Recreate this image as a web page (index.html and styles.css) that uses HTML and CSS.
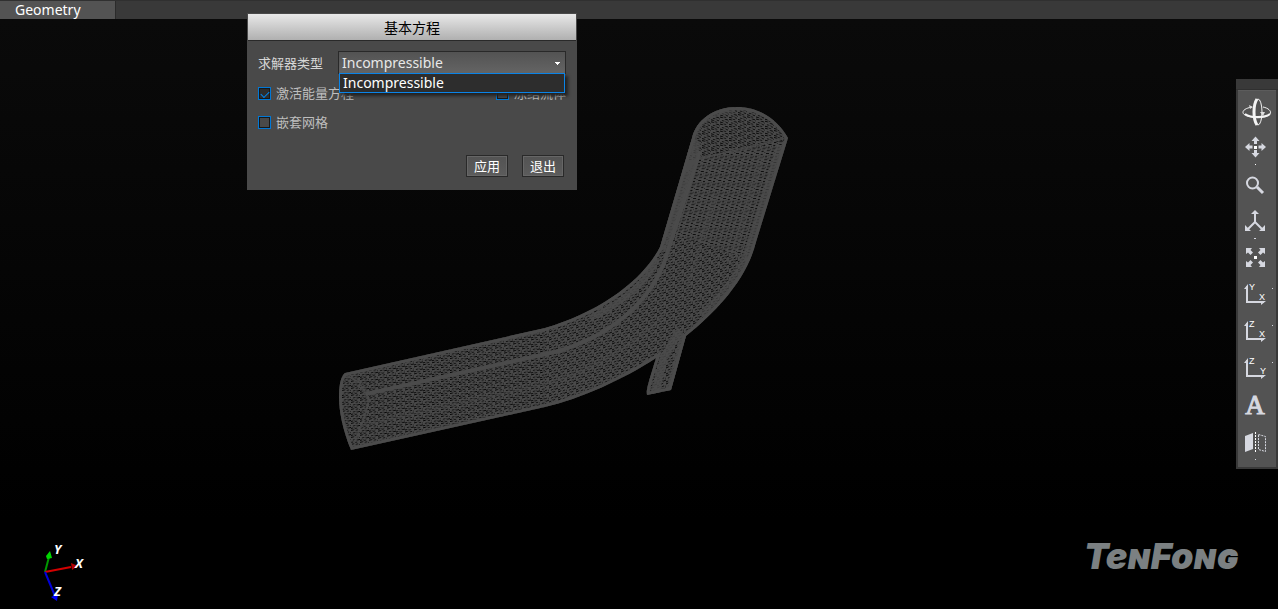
FILE: index.html
```html
<!DOCTYPE html>
<html lang="zh-CN">
<head>
<meta charset="utf-8">
<meta name="viewport" content="width=device-width, initial-scale=1">
<title>Geometry</title>
<link rel="stylesheet" href="styles.css">
</head>
<body>
<div class="app">
  <header class="tabs"><button class="tab" type="button">Geometry</button></header>

  <main class="stage">
    <svg class="model" viewBox="0 19 1278 590" aria-hidden="true">
      <defs>
        <pattern id="mesh-low" width="9" height="7" patternUnits="userSpaceOnUse" patternTransform="skewY(-13)">
          <path d="M0 0h3v1h-3zM5 1h2v1h-2zM2 3h2v1h-2zM6 4h3v1h-3zM0 5h2v1h-2zM4 6h2v1h-2z" fill="#080808"/><path d="M8 2h1v1h-1zM5 3h1v1h-1zM3 5h1v1h-1z" fill="#222"/>
        </pattern>
        <pattern id="mesh-bend" width="9" height="8" patternUnits="userSpaceOnUse" patternTransform="skewY(-24)">
          <path d="M0 0h3v1h-3zM5 1h2v1h-2zM2 3h2v1h-2zM6 4h3v1h-3zM0 6h2v1h-2zM4 6h2v1h-2z" fill="#080808"/><path d="M8 2h1v1h-1zM5 3h1v1h-1zM3 5h1v1h-1z" fill="#222"/>
        </pattern>
        <pattern id="mesh-up" width="10" height="9" patternUnits="userSpaceOnUse" patternTransform="skewX(-16)">
          <path d="M0 0h3v1h-3zM0 3h2v1h-2zM0 6h3v1h-3zM5 1h2v1h-2zM5 4h3v1h-3zM5 7h2v1h-2z" fill="#0a0a0a"/><path d="M3 2h1v1h-1zM8 3h1v1h-1zM3 5h1v1h-1zM8 8h1v1h-1z" fill="#222"/>
        </pattern>
        <pattern id="mesh-cap" width="9" height="7" patternUnits="userSpaceOnUse" patternTransform="skewY(14)">
          <path d="M0 0h3v1h-3zM5 1h3v1h-3zM2 3h2v1h-2zM6 4h2v1h-2zM0 5h3v1h-3zM4 6h2v1h-2z" fill="#080808"/><path d="M8 2h1v1h-1zM5 3h1v1h-1z" fill="#222"/>
        </pattern>
        <clipPath id="pipe-clip"><path id="pipe" d="M345 373 545 328C597 313 642 282 660 247L692 138C696 120 714 107 737 107C760 107 778 120 788 138L756 242C747 279 717 311 686 336L671 390 647 395C646 390 648 384 656 358C624 379 580 399 545 407L351 450C343 431 339 412 339 397C339 384 341 376 345 373Z"/></clipPath>
      </defs>
      <use href="#pipe" fill="#494949"/>
      <g clip-path="url(#pipe-clip)">
        <path d="M330 360 545 315V420L340 470Z" fill="url(#mesh-low)"/>
        <path d="M545 315 640 225 760 262 670 400 545 420Z" fill="url(#mesh-bend)"/>
        <path d="M640 225 700 157 810 132 760 262Z" fill="url(#mesh-up)"/>
        <path d="M680 162V95H800V138Z" fill="url(#mesh-cap)"/>
        <g fill="none" stroke="#4b4b4b">
          <path d="M366 394 555 352C606 338 647 306 664 263L700 151" stroke-width="4"/>
          <path d="M660 250 693 140" stroke-width="17" opacity=".75"/>
          <path d="M657 258C650 280 620 305 590 318" stroke-width="6" opacity=".8"/>
          <path d="M347 376 359 382 369 399C366 414 361 428 354 443" stroke-width="2" opacity=".8"/>
          <path d="M699 158C724 154 757 145 786 138" stroke-width="2" opacity=".8"/>
          <path d="M690 155C693 120 708 112 735 109" stroke-width="7" opacity=".6"/>
          <path d="M781 145 751 242C744 269 727 292 701 316" stroke-width="8" opacity=".65"/>
          <path d="M654 397 664 357 680 330M669 396 684 336" stroke-width="8" opacity=".8"/>
          <path d="M716 195 688 285M762 155 729 264" stroke-width="3" opacity=".4"/>
          <path d="M365 425 545 384C594 371 640 340 664 315" stroke-width="3" opacity=".4"/>
          <use href="#pipe" stroke-width="6"/>
        </g>
      </g>
    </svg>

    <svg class="triad" viewBox="0 0 50 68" role="img" aria-label="X Y Z">
      <path d="M5 32 9 17" stroke="#009900" stroke-width="2"/><path d="M10 11 6 16 7 19 12 18Z" fill="#00d800"/>
      <path d="M5 32 31 27" stroke="#d40000" stroke-width="2"/><path d="M31 23 38 26 32 30Z" fill="#b00000"/>
      <path d="M5 32 15 56" stroke="#0000dc" stroke-width="2"/><path d="M11 57 18 54 17 61Z" fill="#0000ff"/>
      <text x="14" y="14">Y</text><text x="35" y="28">X</text><text x="14" y="56">Z</text>
    </svg>

    <div class="brand">TenFong</div>
  </main>

  <form class="dialog" aria-labelledby="dialog-title">
    <h1 class="dialog-title" id="dialog-title">基本方程</h1>
    <div class="dialog-body">
      <div class="field">
        <label for="solver">求解器类型</label>
        <div class="combo">
          <select class="combo-box" id="solver"><option>Incompressible</option></select>
          <svg class="combo-arrow" viewBox="0 0 5 3" aria-hidden="true"><path d="M0 0h5v1h-1v1h-1v1h-1v-1h-1v-1h-1z" fill="#fff"/></svg>
          <ul class="popup" role="listbox" aria-label="求解器类型"><li role="option" aria-selected="true">Incompressible</li></ul>
        </div>
      </div>
      <div class="checks">
        <label class="check"><input type="checkbox" checked>激活能量方程</label>
        <label class="check"><input type="checkbox">冻结流体</label>
      </div>
      <div class="checks"><label class="check"><input type="checkbox">嵌套网格</label></div>
      <div class="actions"><button class="push" type="button">应用</button><button class="push" type="button">退出</button></div>
    </div>
  </form>

  <nav class="toolbar" aria-label="View">
    <div class="grip"></div>
    <div class="tools">
      <button class="tool" type="button" aria-label="Rotate"><svg viewBox="0 0 38 37">
        <g fill="none" stroke="#f4f4f4"><ellipse cx="20" cy="20" rx="4" ry="13" stroke-width="1"/><path d="M19 7C15 13 15 27 19 33" stroke-width="3"/><path d="M14 15C3 17 3 22 9 24C17 27 29 26 32 22C34 19 30 16 25 15" stroke-width="1"/><path d="M7 22C13 26 27 26 32 22" stroke-width="2"/></g><path d="M11 13 15 15 12 17ZM22 20H27L25 24Z" fill="#ddd"/></svg></button>
      <button class="tool" type="button" aria-label="Pan"><svg viewBox="0 0 38 37">
        <path id="arrow-up" d="M17.5 7.500 21.500 12H19V15H16V12H13.500Z"/><use href="#arrow-up" transform="rotate(90 17.500 18)"/><use href="#arrow-up" transform="rotate(180 17.500 18)"/><use href="#arrow-up" transform="rotate(270 17.500 18)"/><path d="M16 17h3v3h-3zM17 35h1v1h-1z" fill="#fff"/></svg></button>
      <button class="tool" type="button" aria-label="Zoom"><svg viewBox="0 0 38 37"><circle cx="14.500" cy="17" r="5.500" fill="none" stroke="#d6d8e0" stroke-width="2"/><path d="M19 21 25 27" stroke="#d6d8e0" stroke-width="3"/></svg></button>
      <button class="tool" type="button" aria-label="Axes"><svg viewBox="0 0 38 37"><path d="M17 10V19L9 27M17 19 25 27" fill="none" stroke="#d6d8e0" stroke-width="2"/><path d="M17 7 21 11H13ZM7 22V28H13ZM27 22V28H21Z"/><path d="M16 35h2v1h-2z"/></svg></button>
      <button class="tool" type="button" aria-label="Fit"><svg viewBox="0 0 38 37"><path id="corner" d="M8 8H14L12.500 10 15 12.500 12.500 15 10 12.500 8 14Z"/><use href="#corner" transform="rotate(90 17.500 17.500)"/><use href="#corner" transform="rotate(180 17.500 17.500)"/><use href="#corner" transform="rotate(270 17.500 17.500)"/><path d="M16 16h3v3h-3z" fill="#fff"/></svg></button>
      <button class="tool" type="button" aria-label="XY view"><svg viewBox="0 0 38 37"><g id="ortho"><path d="M9 9V25H26" fill="none" stroke="#d6d8e0" stroke-width="2"/><path d="M6 12 10 7V12ZM23 28 28 24H23ZM34 11h1v1h-1z"/></g><text x="11" y="13">Y</text><text x="21" y="23">X</text></svg></button>
      <button class="tool" type="button" aria-label="XZ view"><svg viewBox="0 0 38 37"><use href="#ortho"/><text x="11" y="13">Z</text><text x="21" y="23">X</text></svg></button>
      <button class="tool" type="button" aria-label="YZ view"><svg viewBox="0 0 38 37"><use href="#ortho"/><text x="11" y="13">Z</text><text x="22" y="23">Y</text></svg></button>
      <button class="tool" type="button" aria-label="Text"><svg viewBox="0 0 38 37"><text class="letter" x="17" y="26">A</text></svg></button>
      <button class="tool" type="button" aria-label="Mirror"><svg viewBox="0 0 38 37"><path d="M7 11 15 8V24L7 27Z"/><path d="M17.500 7V28" stroke="#fff" stroke-dasharray="2 1"/><path d="M20.500 9.500 27.500 11.500V26.500L20.500 24.500Z" fill="none" stroke="#d6d8e0" stroke-dasharray="2 1"/><path d="M17 34h1v1h-1z"/></svg></button>
    </div>
  </nav>
</div>
</body>
</html>
```
FILE: styles.css
```css
* { box-sizing: border-box; }
body {
  margin: 0;
  background: #000;
  color: #fff;
  font: 13px/20px "Noto Sans CJK SC", sans-serif;
}
button, select, input { font: inherit; color: inherit; margin: 0; }
.app { position: relative; min-height: 100vh; display: flex; flex-direction: column; }

.tabs { display: flex; height: 19px; background: #393939; border-top: 1px solid #303030; }
.tab {
  padding: 0 34px 0 15px;
  border: 0;
  border-right: 1px solid #2b2b2b;
  background: #535353;
  font: 14px/18px "Noto Sans", sans-serif;
}

.stage { position: relative; flex: 1; background: linear-gradient(#0a0a0a, #000 85%); }
.model { position: absolute; inset: 0; width: 100%; height: 100%; }
.triad { position: absolute; left: 40px; bottom: 1px; width: 50px; height: 68px; fill: none; }
.triad text { fill: #fff; font: italic bold 13px "Open Sans", sans-serif; }
.brand {
  position: absolute;
  right: 40px;
  bottom: 33px;
  color: #7b8082;
  font: italic 900 36px/40px Inter, sans-serif;
  font-variant-caps: small-caps;
}

.dialog {
  position: absolute;
  left: 247px;
  top: 13px;
  width: 330px;
  background: #494949;
  border: 1px solid #494949;
}
.dialog-title {
  margin: 0;
  border-bottom: 1px solid #292929;
  background: linear-gradient(#e8e8e8, #b0b0b0);
  color: #000;
  font-size: 14px;
  font-weight: 400;
  line-height: 26px;
  text-align: center;
}
.dialog-body { padding: 10px 10px 12px; color: #bebebe; }
.field { display: flex; align-items: center; gap: 15px; color: #d6d6d6; }
.combo { position: relative; flex: 1; }
.combo-box {
  display: block;
  width: 100%;
  height: 23px;
  padding: 0 3px;
  border: 1px solid #292929;
  border-radius: 0;
  appearance: none;
  background: linear-gradient(#535353, #646464);
  color: #e8e8e8;
  font: 14px/20px "Noto Sans", sans-serif;
}
.combo-arrow { position: absolute; right: 6px; top: 11px; width: 5px; height: 3px; }
.popup {
  position: absolute;
  z-index: 1;
  left: 1px;
  right: 1px;
  top: 22px;
  margin: 0;
  padding: 0 3px;
  border: 1px solid #0a84e8;
  background: #2d2d2d;
  box-shadow: 3px 3px 3px #222;
  color: #fff;
  font: 14px/18px "Noto Sans", sans-serif;
  list-style: none;
}
.checks { display: flex; justify-content: space-between; margin-top: 9px; }
.checks:first-of-type { margin-top: 10px; }
.check { display: flex; align-items: center; gap: 5px; }
.check input {
  appearance: none;
  width: 13px;
  height: 13px;
  border: 1px solid #0078d7;
  background: #494949;
  box-shadow: inset 0 0 0 1px #181818;
}
.check input:checked { background: #2d2d2d; display: grid; place-items: center; }
.check input:checked::before {
  content: "";
  width: 7px;
  height: 4px;
  border: solid #0086f0;
  border-width: 0 0 1px 1px;
  transform: rotate(-45deg);
}
.actions { display: flex; justify-content: flex-end; gap: 14px; margin: 23px 2px 0 0; }
.push {
  width: 42px;
  height: 22px;
  padding: 0;
  border: 1px solid #292929;
  background: linear-gradient(#535353, #5c5c5c);
  box-shadow: inset 0 0 0 1px #666;
  color: #fff;
  line-height: 18px;
}

.toolbar { position: absolute; right: 0; top: 79px; width: 42px; background: #393939; }
.grip { height: 11px; border-bottom: 1px solid #303030; }
.tools { margin: 0 2px 2px; padding: 1px 0 5px; background: #535353; border-top: 1px solid #5c5c5c; }
.tool { display: block; width: 100%; padding: 0; border: 0; background: none; }
.tool svg { display: block; width: 38px; height: 37px; fill: #d6d8e0; }
.tool text { fill: #fff; font: 9px "Liberation Sans", sans-serif; }
.tool .letter { fill: #d6d8e0; stroke: #d6d8e0; stroke-width: 1px; font: 27px "Liberation Serif", serif; text-anchor: middle; }
```
